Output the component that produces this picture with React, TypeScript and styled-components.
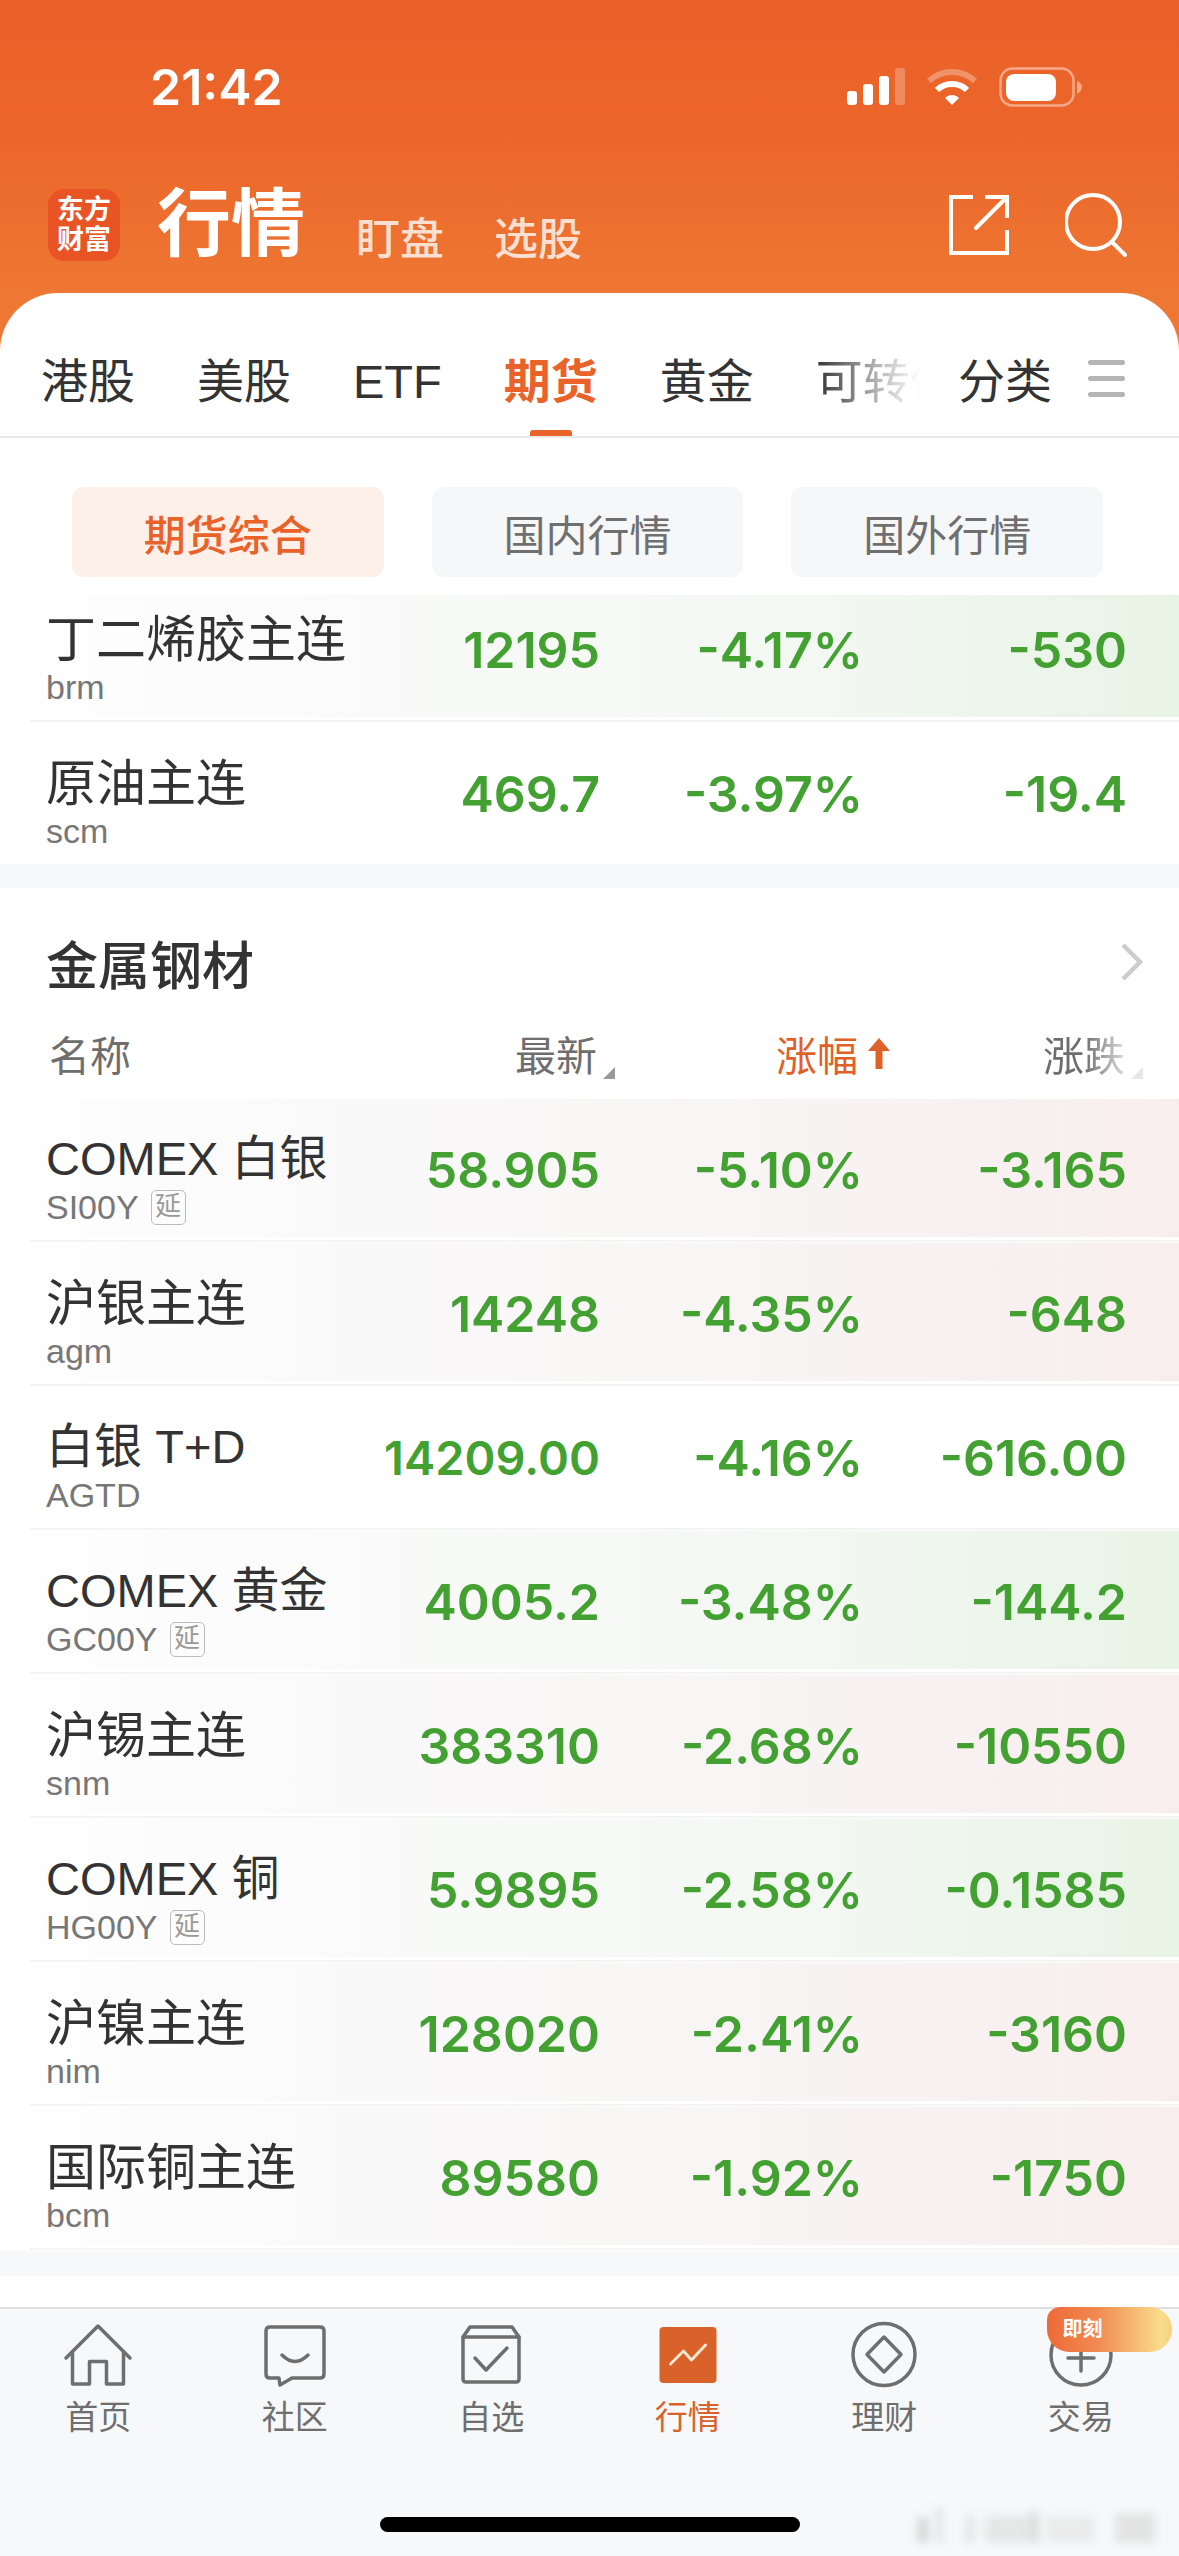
import React from 'react';
import styled, { createGlobalStyle } from 'styled-components';

const GlobalStyle = createGlobalStyle`
  html, body {
    margin: 0;
    padding: 0;
    background: #fff;
  }
  body {
    font-family: "Liberation Sans", "Noto Sans CJK SC", sans-serif;
  }
`;

const Page = styled.div`
  width: 1179px;
  height: 2556px;
  overflow: hidden;
  display: flex;
  flex-direction: column;
  background: #fff;
`;

// Orange header
const Header = styled.header`
  height: 360px;
  flex: none;
  box-sizing: border-box;
  padding-top: 68px;
  background: linear-gradient(180deg, #ea6229 0px, #eb6429 120px, #ee7733 294px, #ee7733 360px);
  color: #fff;
`;

const StatusBar = styled.div`
  height: 38px;
  display: flex;
  align-items: center;
  padding: 0 96px 0 150px;
`;

const Clock = styled.span`
  font-family: Inter, "Liberation Sans", sans-serif;
  font-size: 50px;
  font-weight: 600;
  line-height: 38px;
`;

const StatusIcons = styled.div`
  margin-left: auto;
  display: flex;
  align-items: center;
  gap: 22px;
`;

const TitleBar = styled.div`
  margin-top: 83px;
  display: flex;
  align-items: center;
  padding: 0 52px 0 48px;
`;

const Logo = styled.div`
  width: 72px;
  height: 72px;
  flex: none;
  border-radius: 16px;
  background: #e95425;
  display: flex;
  flex-direction: column;
  align-items: center;
  justify-content: center;
  font-size: 27px;
  line-height: 30px;
  font-weight: 700;
`;

const TitleGroup = styled.div`
  margin-left: 37px;
  display: flex;
  align-items: flex-end;
`;

const PageTitle = styled.h1`
  margin: 0 51px 0 0;
  font-size: 74px;
  line-height: 72px;
  font-weight: 700;
`;

const SubTitle = styled.span`
  font-size: 44px;
  line-height: 50px;
  margin: 0 50px -4px 0;
  font-weight: 500;
  color: rgba(255, 255, 255, 0.78);
`;

const TitleActions = styled.div`
  margin-left: auto;
  display: flex;
  align-items: center;
  gap: 55px;
`;

// White sheet: market tabs
const TabStrip = styled.nav`
  margin-top: -67px;
  height: 145px;
  flex: none;
  box-sizing: border-box;
  border-radius: 58px 58px 0 0;
  border-bottom: 2px solid #e9e9e9;
  background: #fff;
  display: flex;
  align-items: flex-start;
  padding: 64px 54px 0 41px;
`;

const TabScroller = styled.div`
  display: flex;
  gap: 62px;
  width: 884px;
  flex: none;
`;

const Tab = styled.span<{ $active?: boolean }>`
  position: relative;
  flex: none;
  height: 79px;
  font-size: 47px;
  line-height: 50px;
  font-weight: ${({ $active }) => ($active ? 700 : 400)};
  color: ${({ $active }) => ($active ? '#e8622a' : '#333')};
`;

const TabMark = styled.i`
  position: absolute;
  left: 26px;
  bottom: 0;
  width: 42px;
  height: 6px;
  border-radius: 3px 3px 0 0;
  background: #e8622a;
`;

const FadingTab = styled(Tab)`
  width: 104px;
  white-space: nowrap;
  overflow: hidden;
  -webkit-mask-image: linear-gradient(to right, #000 0%, rgba(0, 0, 0, 0.35) 60%, transparent 100%);
  mask-image: linear-gradient(to right, #000 0%, rgba(0, 0, 0, 0.35) 60%, transparent 100%);
`;

const CategoryTab = styled(Tab)`
  margin-left: 33px;
`;

const MenuBars = styled.div`
  margin: 3px 0 0 36px;
  width: 37px;
  display: flex;
  flex-direction: column;
  gap: 11px;
  span {
    height: 5px;
    border-radius: 3px;
    background: #b5b5b5;
  }
`;

// Sub filter chips
const ChipRow = styled.div`
  flex: none;
  display: flex;
  gap: 48px;
  padding: 49px 76px 18px 72px;
`;

const Chip = styled.div<{ $active?: boolean }>`
  width: 312px;
  height: 90px;
  border-radius: 12px;
  background: ${({ $active }) => ($active ? '#fdf0e9' : '#f6f7f9')};
  color: ${({ $active }) => ($active ? '#e8622a' : '#6f6f6f')};
  font-size: 42px;
  font-weight: ${({ $active }) => ($active ? 500 : 400)};
  display: flex;
  align-items: center;
  justify-content: center;
`;

// Quote rows
const ClippedList = styled.div`
  height: 269px;
  flex: none;
  overflow: hidden;
`;

const ClippedInner = styled.div`
  margin-top: -16px;
`;

const tints = {
  green: 'linear-gradient(to right, #fefefe 0%, #f9faf9 30%, #f4f8f3 65%, #e8f4e6 100%)',
  red: 'linear-gradient(to right, #fefefe 0%, #faf9f9 30%, #f8f4f4 65%, #f9eeee 100%)',
  none: '#fff',
};

type Tint = keyof typeof tints;

const Row = styled.div<{ $tint: Tint }>`
  height: 138px;
  margin: 0 0 6px 30px;
  padding: 0 52px 0 16px;
  display: grid;
  grid-template-columns: 1fr 230px 263px 264px;
  background: ${({ $tint }) => tints[$tint]};
  box-shadow: 0 3px 0 #fff, 0 5px 0 #f4f4f4;
`;

const NameCell = styled.div`
  padding-top: 32px;
  white-space: nowrap;
`;

const Name = styled.div<{ $mixed?: boolean }>`
  height: 56px;
  font-size: ${({ $mixed }) => ($mixed ? 48 : 50)}px;
  line-height: ${({ $mixed }) => ($mixed ? 56 : 58)}px;
  color: #333;
`;

const Latin = styled.span`
  font-size: 47px;
`;

const Code = styled.div`
  height: 40px;
  display: flex;
  align-items: center;
  font-size: 34px;
  line-height: 40px;
  color: #777;
`;

const DelayTag = styled.span`
  margin-left: 12px;
  width: 35px;
  height: 35px;
  box-sizing: border-box;
  border: 1.5px solid #bbb;
  border-radius: 5px;
  font-size: 26px;
  line-height: 31px;
  text-align: center;
  color: #999;
`;

// long prices shrink to fit the column, as they do in the app
const Value = styled.div<{ $fit?: boolean }>`
  padding-top: 4px;
  align-self: center;
  text-align: right;
  font-family: Inter, "Liberation Sans", sans-serif;
  font-size: ${({ $fit }) => ($fit ? 47 : 50)}px;
  font-weight: 600;
  line-height: 60px;
  color: #43a132;
  white-space: nowrap;
`;

const GrayGap = styled.div<{ $h: number }>`
  height: ${({ $h }) => $h}px;
  flex: none;
  background: #f7f8fa;
`;

// Metals section head
const SectionHead = styled.div`
  height: 132px;
  box-sizing: border-box;
  flex: none;
  padding: 16px 36px 0 46px;
  display: flex;
  align-items: center;
  justify-content: space-between;
`;

const SectionTitle = styled.h2`
  margin: 0;
  font-size: 52px;
  font-weight: 500;
  color: #333;
`;

const ColumnHead = styled.div`
  height: 79px;
  box-sizing: border-box;
  flex: none;
  padding: 0 36px 13px 49px;
  display: grid;
  grid-template-columns: 1fr 245px 275px 253px;
  align-items: center;
  font-size: 41px;
  color: #6e6e6e;
`;

const HeadCell = styled.div<{ $active?: boolean }>`
  display: flex;
  justify-content: flex-end;
  align-items: center;
  gap: ${({ $active }) => ($active ? 10 : 6)}px;
  color: ${({ $active }) => ($active ? '#df6127' : 'inherit')};
`;

const FadedLabel = styled.span`
  -webkit-mask-image: linear-gradient(to right, #000 50%, rgba(0, 0, 0, 0.25) 100%);
  mask-image: linear-gradient(to right, #000 50%, rgba(0, 0, 0, 0.25) 100%);
`;

const SortCorner = styled.svg`
  align-self: flex-end;
  margin-bottom: 4px;
`;

const QuoteList = styled.div`
  flex: none;
`;

const WhiteGap = styled.div`
  flex: 1;
`;

// Bottom tab bar
const BottomBar = styled.footer`
  position: relative;
  height: 249px;
  flex: none;
  box-sizing: border-box;
  border-top: 2px solid #dedede;
  background: #f7f8fa;
  padding-top: 12px;
`;

const BottomItems = styled.div`
  display: grid;
  grid-template-columns: repeat(6, 1fr);
`;

const BottomItem = styled.div<{ $active?: boolean }>`
  position: relative;
  display: flex;
  flex-direction: column;
  align-items: center;
  font-size: 33px;
  line-height: 40px;
  color: ${({ $active }) => ($active ? '#d8622a' : '#6e6e6e')};
  svg {
    display: block;
    margin-bottom: 7px;
  }
`;

const PromoBadge = styled.div`
  position: absolute;
  left: 64px;
  top: -14px;
  width: 125px;
  height: 45px;
  box-sizing: border-box;
  padding-left: 16px;
  border-radius: 14px 24px 24px 24px;
  background: linear-gradient(to right, #ee6a38 0%, #f08a50 40%, #f9dd8c 92%, #f8d07c 100%);
  color: #fff;
  font-size: 20px;
  font-weight: 700;
  line-height: 45px;
`;

const HomeIndicator = styled.div`
  width: 420px;
  height: 15px;
  margin: 79px auto 0;
  border-radius: 8px;
  background: #000;
`;

const Watermark = styled.div`
  position: absolute;
  left: 917px;
  top: 198px;
  display: flex;
  align-items: flex-end;
  filter: blur(4px);
  opacity: 0.65;
  span {
    display: block;
    flex: none;
  }
`;

const WatermarkBlock = styled.span<{ $w: number; $h: number; $c: string; $ml: number }>`
  width: ${({ $w }) => $w}px;
  height: ${({ $h }) => $h}px;
  margin-left: ${({ $ml }) => $ml}px;
  background: ${({ $c }) => $c};
`;

const SignalIcon = () => (
  <svg width="58" height="38" viewBox="0 0 58 38">
    <rect x="0" y="23" width="10" height="14" rx="3" fill="#fff" />
    <rect x="16" y="16" width="10" height="21" rx="3" fill="#fff" />
    <rect x="32" y="8" width="10" height="29" rx="3" fill="#fff" />
    <rect x="48" y="0" width="10" height="37" rx="3" fill="#fff" fillOpacity="0.25" />
  </svg>
);

const WifiIcon = () => (
  <svg width="50" height="38" viewBox="0 0 50 38">
    <path d="M2 13 C15 1 35 1 48 13" fill="none" stroke="#fff" strokeOpacity="0.3" strokeWidth="6" />
    <path d="M10 22 C18 14 32 14 40 22" fill="none" stroke="#fff" strokeWidth="6" />
    <path d="M18 30 C22 26 28 26 32 30 L25 37 Z" fill="#fff" />
  </svg>
);

const BatteryIcon = () => (
  <svg width="84" height="40" viewBox="0 0 84 40">
    <rect x="1.5" y="1.5" width="73" height="37" rx="12" fill="none" stroke="#fff" strokeOpacity="0.45" strokeWidth="2.5" />
    <rect x="7" y="7" width="50" height="27" rx="8" fill="#fff" />
    <path d="M78 14 C81 15 83 18 83 20 C83 23 81 25 78 27 Z" fill="#fff" fillOpacity="0.45" />
  </svg>
);

const ShareIcon = () => (
  <svg width="62" height="62" viewBox="0 0 62 62" fill="none" stroke="#fff" strokeWidth="4">
    <path d="M25 3 H3 V59 H59 V36" />
    <path d="M37 3 H59 V24" />
    <path d="M59 3 L28 34" strokeLinecap="round" />
  </svg>
);

const SearchIcon = () => (
  <svg width="62" height="64" viewBox="0 0 62 64" fill="none" stroke="#fff" strokeWidth="4">
    <circle cx="28" cy="29" r="27" />
    <path d="M47 49 L60 62" strokeLinecap="round" />
  </svg>
);

const Chevron = () => (
  <svg width="22" height="38" viewBox="0 0 22 38" fill="none" stroke="#ccc" strokeWidth="4.5">
    <path d="M2 2 L19 19 L2 36" />
  </svg>
);

const Corner = ({ color }: { color: string }) => (
  <SortCorner width="12" height="12" viewBox="0 0 12 12">
    <path d="M12 0 V12 H0 Z" fill={color} />
  </SortCorner>
);

const UpArrow = () => (
  <svg width="22" height="32" viewBox="0 0 22 32">
    <rect x="7.5" y="10" width="7" height="22" fill="#df6127" />
    <path d="M0 14 L11 1 L22 14 Z" fill="#df6127" />
  </svg>
);

const iconStroke = { fill: 'none', stroke: '#6e6e6e', strokeWidth: 3.5, strokeLinejoin: 'round', strokeLinecap: 'round' } as const;

const HomeIcon = () => (
  <svg width="70" height="70" viewBox="0 0 70 70" {...iconStroke}>
    <path d="M3 37 L35 5 L67 37" />
    <path d="M9.5 31 V63 H26.5 V40.5 H43.5 V63 H60.5 V31" />
  </svg>
);

const CommunityIcon = () => (
  <svg width="70" height="70" viewBox="0 0 70 70" {...iconStroke}>
    <path d="M10 6 H60 Q64 6 64 10 V53 Q64 57 60 57 H32 L20 64 L19 57 H10 Q6 57 6 53 V10 Q6 6 10 6 Z" />
    <path d="M22 34 Q35 47 48 34" />
  </svg>
);

const WatchIcon = () => (
  <svg width="70" height="70" viewBox="0 0 70 70" {...iconStroke}>
    <path d="M7 16 L14 6 H56 L63 16 V58 Q63 61 60 61 H10 Q7 61 7 58 Z" />
    <path d="M7 16 H63" />
    <path d="M19 37 L30 49 L51 27" />
  </svg>
);

const MarketIcon = () => (
  <svg width="70" height="70" viewBox="0 0 70 70">
    <rect x="6.5" y="6" width="57" height="56" rx="4" fill="#d8622a" />
    <path d="M17.5 43 L30.5 30 L38.5 39 L52.5 24" fill="none" stroke="#fbe6cf" strokeWidth="3" strokeLinecap="round" strokeLinejoin="round" />
  </svg>
);

const WealthIcon = () => (
  <svg width="70" height="70" viewBox="0 0 70 70" {...iconStroke}>
    <circle cx="35" cy="33.5" r="31" />
    <path d="M35 16 L52 33.5 L35 51 L18 33.5 Z" />
  </svg>
);

const TradeIcon = () => (
  <svg width="70" height="70" viewBox="0 0 70 70" {...iconStroke}>
    <circle cx="35" cy="34" r="30" />
    <path d="M22 37 H48 M35 24 V50" />
  </svg>
);

interface Quote {
  name: React.ReactNode;
  mixed?: boolean;
  code: string;
  delayed?: boolean;
  last: string;
  pct: string;
  chg: string;
  tint: Tint;
}

const topQuotes: Quote[] = [
  { name: '丁二烯胶主连', code: 'brm', last: '12195', pct: '-4.17%', chg: '-530', tint: 'green' },
  { name: '原油主连', code: 'scm', last: '469.7', pct: '-3.97%', chg: '-19.4', tint: 'none' },
];

const metalQuotes: Quote[] = [
  { name: <><Latin>COMEX </Latin>白银</>, mixed: true, code: 'SI00Y', delayed: true, last: '58.905', pct: '-5.10%', chg: '-3.165', tint: 'red' },
  { name: '沪银主连', code: 'agm', last: '14248', pct: '-4.35%', chg: '-648', tint: 'red' },
  { name: <>白银 <Latin>T+D</Latin></>, mixed: true, code: 'AGTD', last: '14209.00', pct: '-4.16%', chg: '-616.00', tint: 'none' },
  { name: <><Latin>COMEX </Latin>黄金</>, mixed: true, code: 'GC00Y', delayed: true, last: '4005.2', pct: '-3.48%', chg: '-144.2', tint: 'green' },
  { name: '沪锡主连', code: 'snm', last: '383310', pct: '-2.68%', chg: '-10550', tint: 'red' },
  { name: <><Latin>COMEX </Latin>铜</>, mixed: true, code: 'HG00Y', delayed: true, last: '5.9895', pct: '-2.58%', chg: '-0.1585', tint: 'green' },
  { name: '沪镍主连', code: 'nim', last: '128020', pct: '-2.41%', chg: '-3160', tint: 'red' },
  { name: '国际铜主连', code: 'bcm', last: '89580', pct: '-1.92%', chg: '-1750', tint: 'red' },
];

const QuoteRow = ({ quote }: { quote: Quote }) => (
  <Row $tint={quote.tint}>
    <NameCell>
      <Name $mixed={quote.mixed}>{quote.name}</Name>
      <Code>
        {quote.code}
        {quote.delayed && <DelayTag>延</DelayTag>}
      </Code>
    </NameCell>
    <Value $fit={quote.last.length > 7}>{quote.last}</Value>
    <Value>{quote.pct}</Value>
    <Value>{quote.chg}</Value>
  </Row>
);

const watermarkBlocks = [
  { w: 12, h: 26, c: '#c9c9c9', ml: 0 },
  { w: 7, h: 36, c: '#d8d8d8', ml: 7 },
  { w: 10, h: 28, c: '#dcdcdc', ml: 22 },
  { w: 45, h: 28, c: '#dedede', ml: 10 },
  { w: 9, h: 32, c: '#cfcfcf', ml: 0 },
  { w: 50, h: 28, c: '#e6e6e6', ml: 6 },
  { w: 40, h: 30, c: '#d9d9d9', ml: 20 },
];

const App: React.FC = () => {
  return (
    <Page>
      <GlobalStyle />
      <Header>
        <StatusBar>
          <Clock>21:42</Clock>
          <StatusIcons>
            <SignalIcon />
            <WifiIcon />
            <BatteryIcon />
          </StatusIcons>
        </StatusBar>
        <TitleBar>
          <Logo>
            <span>东方</span>
            <span>财富</span>
          </Logo>
          <TitleGroup>
            <PageTitle>行情</PageTitle>
            <SubTitle>盯盘</SubTitle>
            <SubTitle>选股</SubTitle>
          </TitleGroup>
          <TitleActions>
            <ShareIcon />
            <SearchIcon />
          </TitleActions>
        </TitleBar>
      </Header>

      <TabStrip>
        <TabScroller>
          <Tab>港股</Tab>
          <Tab>美股</Tab>
          <Tab>ETF</Tab>
          <Tab $active>
            期货
            <TabMark />
          </Tab>
          <Tab>黄金</Tab>
          <FadingTab>可转债</FadingTab>
        </TabScroller>
        <CategoryTab>分类</CategoryTab>
        <MenuBars>
          <span />
          <span />
          <span />
        </MenuBars>
      </TabStrip>

      <ChipRow>
        <Chip $active>期货综合</Chip>
        <Chip>国内行情</Chip>
        <Chip>国外行情</Chip>
      </ChipRow>

      <ClippedList>
        <ClippedInner>
          {topQuotes.map((q) => (
            <QuoteRow key={q.code} quote={q} />
          ))}
        </ClippedInner>
      </ClippedList>
      <GrayGap $h={24} />

      <SectionHead>
        <SectionTitle>金属钢材</SectionTitle>
        <Chevron />
      </SectionHead>
      <ColumnHead>
        <span>名称</span>
        <HeadCell>
          最新
          <Corner color="#9a9a9a" />
        </HeadCell>
        <HeadCell $active>
          涨幅
          <UpArrow />
        </HeadCell>
        <HeadCell>
          <FadedLabel>涨跌</FadedLabel>
          <Corner color="#e6e6e6" />
        </HeadCell>
      </ColumnHead>
      <QuoteList>
        {metalQuotes.map((q) => (
          <QuoteRow key={q.code} quote={q} />
        ))}
      </QuoteList>
      <GrayGap $h={25} />
      <WhiteGap />

      <BottomBar>
        <BottomItems>
          <BottomItem>
            <HomeIcon />
            首页
          </BottomItem>
          <BottomItem>
            <CommunityIcon />
            社区
          </BottomItem>
          <BottomItem>
            <WatchIcon />
            自选
          </BottomItem>
          <BottomItem $active>
            <MarketIcon />
            行情
          </BottomItem>
          <BottomItem>
            <WealthIcon />
            理财
          </BottomItem>
          <BottomItem>
            <TradeIcon />
            交易
            <PromoBadge>即刻</PromoBadge>
          </BottomItem>
        </BottomItems>
        <HomeIndicator />
        <Watermark>
          {watermarkBlocks.map((b, i) => (
            <WatermarkBlock key={i} $w={b.w} $h={b.h} $c={b.c} $ml={b.ml} />
          ))}
        </Watermark>
      </BottomBar>
    </Page>
  );
};

export default App;
